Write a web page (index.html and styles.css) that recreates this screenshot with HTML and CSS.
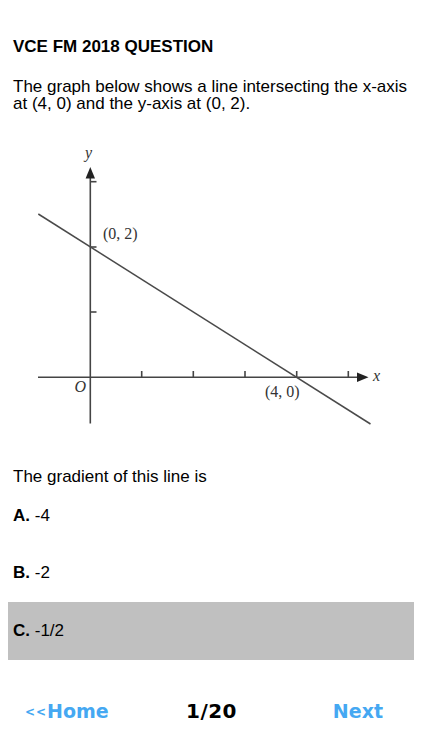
FILE: index.html
```html
<!DOCTYPE html>
<html>
<head>
<meta charset="utf-8">
<link rel="stylesheet" href="styles.css">
</head>
<body>
<div class="page">
  <h1 class="title">VCE FM 2018 QUESTION</h1>
  <p class="intro">The graph below shows a line intersecting the x-axis at (4, 0) and the y-axis at (0, 2).</p>
  <svg class="graph" width="406" height="355" viewBox="8 112 406 355" xmlns="http://www.w3.org/2000/svg">
    <g stroke="#444" stroke-width="1.6" fill="none">
      <line x1="90.3" y1="176" x2="90.3" y2="423.5"/>
      <line x1="38" y1="377.3" x2="359" y2="377.3"/>
      <line x1="90.3" y1="181.7" x2="96.5" y2="181.7"/>
      <line x1="90.3" y1="247" x2="96.5" y2="247"/>
      <line x1="90.3" y1="312" x2="96.5" y2="312"/>
      <line x1="141.7" y1="371" x2="141.7" y2="377.3"/>
      <line x1="193.3" y1="371" x2="193.3" y2="377.3"/>
      <line x1="245" y1="371" x2="245" y2="377.3"/>
      <line x1="296.7" y1="371" x2="296.7" y2="377.3"/>
      <line x1="348.3" y1="371" x2="348.3" y2="377.3"/>
      <line x1="38.3" y1="214" x2="370.5" y2="424" stroke="#4a4a4a" stroke-width="1.5"/>
    </g>
    <polygon points="90.3,167 85.6,178.5 95,178.5" fill="#222"/>
    <polygon points="368.5,377.3 357,372.5 357,382.1" fill="#222"/>
    <g class="lbl">
      <text x="85" y="158" class="var">y</text>
      <text x="373" y="380.5" class="var">x</text>
      <text x="74.5" y="391.5" class="var">O</text>
      <text x="103" y="239">(0, 2)</text>
      <text x="265" y="397">(4, 0)</text>
    </g>
  </svg>
  <p class="question">The gradient of this line is</p>
  <ul class="options">
    <li class="option"><b>A.</b> -4</li>
    <li class="option"><b>B.</b> -2</li>
    <li class="option selected"><b>C.</b> -1/2</li>
  </ul>
  <nav class="footer">
    <span class="nav-link home"><span class="chev">&lt;&lt;</span>Home</span>
    <span class="counter">1/20</span>
    <span class="nav-link next">Next</span>
  </nav>
</div>
</body>
</html>
```

FILE: styles.css
```css
html, body {
  margin: 0;
  padding: 0;
  background: #fff;
}
.page {
  width: 406px;
  padding: 37px 8px 0 8px;
  font-family: "Liberation Sans", Arial, sans-serif;
  color: #000;
}
.title {
  margin: 0;
  padding-left: 5px;
  font-size: 17px;
  font-weight: bold;
  line-height: 20px;
}
.intro {
  margin: 21px 0 0 0;
  padding-left: 5px;
  font-size: 17px;
  line-height: 17px;
}
.graph {
  display: block;
}
.lbl text {
  font-family: "Liberation Serif", "Times New Roman", serif;
  font-size: 16px;
  fill: #333;
}
.lbl text.var {
  font-style: italic;
}
.question {
  margin: 0;
  padding-left: 5px;
  font-size: 17px;
  line-height: 20px;
}
.options {
  list-style: none;
  margin: 0;
  padding: 0;
}
.option {
  height: 57.5px;
  display: flex;
  align-items: center;
  padding-left: 5px;
  font-size: 17px;
  line-height: 20px;
  white-space: pre;
}
.option.selected {
  background: #c0c0c0;
}
.footer {
  margin-top: 31px;
  height: 40px;
  display: grid;
  grid-template-columns: 1fr auto 1fr;
  align-items: center;
  padding: 0 16px 0 17px;
  font-family: "DejaVu Sans", sans-serif;
  font-weight: bold;
  font-size: 19px;
}
.nav-link {
  color: #45a8f2;
}
.home {
  justify-self: start;
}
.chev {
  font-size: 12px;
  letter-spacing: 1px;
  vertical-align: 2px;
}
.next {
  justify-self: end;
  margin-right: 15px;
}
.counter {
  color: #000;
  font-size: 20px;
  letter-spacing: 0.5px;
}
```
